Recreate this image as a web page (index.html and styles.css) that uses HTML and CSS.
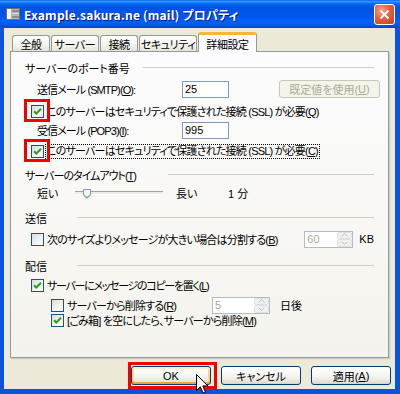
FILE: index.html
```html
<!DOCTYPE html>
<html>
<head>
    <meta charset="utf-8">
    <title>Example.sakura.ne (mail) プロパティ</title>
    <link rel="stylesheet" href="styles.css">
</head>
<body>
    <div class="window">
        <div class="title-bar">
            <svg class="title-icon" width="16" height="14" viewBox="0 0 16 14">
                <rect x="1.5" y="1.5" width="13" height="11" fill="#B9B9B4" stroke="#6E6E6A"/>
                <rect x="2" y="2" width="4" height="10" fill="#F4F4F0"/>
                <rect x="7" y="3" width="7" height="2" fill="#8C8C88"/>
                <rect x="7" y="6" width="7" height="1" fill="#DADAD5"/>
                <rect x="7" y="9" width="7" height="2" fill="#8C8C88"/>
            </svg>
            <span class="title-text">Example.sakura.ne (mail) プロパティ</span>
            <div class="close-btn">
                <svg width="11" height="11" viewBox="0 0 11 11">
                    <path d="M1.5 1.5 L9.5 9.5 M9.5 1.5 L1.5 9.5" stroke="#fff" stroke-width="2" fill="none"/>
                </svg>
            </div>
        </div>

        <div class="client">
            <div class="tabs">
                <div class="tab w-general">全般</div>
                <div class="tab w-server">サーバー</div>
                <div class="tab w-conn">接続</div>
                <div class="tab w-security">セキュリティ</div>
                <div class="tab active">詳細設定</div>
            </div>

            <div class="sheet">
                <!-- port numbers -->
                <div class="group">
                    <div class="group-head">
                        <span class="group-label w-port">サーバーのポート番号</span>
                        <span class="group-line"></span>
                    </div>
                    <div class="row field mt7">
                        <span class="field-label">送信メール (SMTP)(<u>O</u>):</span>
                        <span class="textbox">25</span>
                        <span class="btn disabled default-btn">既定値を使用(<u>U</u>)</span>
                    </div>
                    <div class="row cb mt8">
                        <span class="check on"><svg width="11" height="11" viewBox="0 0 11 11"><path d="M2 5.2 L4.3 7.5 L9 2.8" stroke="#21A121" stroke-width="2" fill="none"/></svg></span>
                        <span class="cb-text">このサーバーはセキュリティで保護された接続 (SSL) が必要(<u>Q</u>)</span>
                    </div>
                    <div class="row field mt5">
                        <span class="field-label">受信メール (POP3)(<u>I</u>):</span>
                        <span class="textbox">995</span>
                    </div>
                    <div class="row cb mt7">
                        <span class="check on"><svg width="11" height="11" viewBox="0 0 11 11"><path d="M2 5.2 L4.3 7.5 L9 2.8" stroke="#21A121" stroke-width="2" fill="none"/></svg></span>
                        <span class="cb-text focus">このサーバーはセキュリティで保護された接続 (SSL) が必要(<u>C</u>)</span>
                    </div>
                </div>

                <!-- timeout -->
                <div class="group mt10">
                    <div class="group-head">
                        <span class="group-label w-timeout">サーバーのタイムアウト(<u>T</u>)</span>
                        <span class="group-line"></span>
                    </div>
                    <div class="row field mt4">
                        <span class="slider-label">短い</span>
                        <span class="slider">
                            <span class="track"></span>
                            <svg class="thumb" width="8" height="10" viewBox="0 0 8 10">
                                <path d="M0.5 0.5 H7.5 V6 L4 9.5 L0.5 6 Z" fill="#F6F6F2" stroke="#8597A8"/>
                                <path d="M1.5 6.3 L4 8.6 L6.5 6.3" stroke="#3DB53D" fill="none"/>
                            </svg>
                        </span>
                        <span class="slider-label long">長い</span>
                        <span>1 分</span>
                    </div>
                </div>

                <!-- send -->
                <div class="group mt11">
                    <div class="group-head">
                        <span class="group-label w-short">送信</span>
                        <span class="group-line"></span>
                    </div>
                    <div class="row cb mt7">
                        <span class="check"></span>
                        <span class="cb-text">次のサイズよりメッセージが大きい場合は分割する(<u>B</u>)</span>
                        <span class="spin w-kb">
                            <span class="spin-val">60</span>
                            <span class="spin-btns">
                                <span class="spin-btn"><svg width="7" height="4" viewBox="0 0 7 4"><path d="M0.5 3.5 L3.5 0.5 L6.5 3.5" stroke="#C3C2BA" fill="none"/></svg></span>
                                <span class="spin-btn"><svg width="7" height="4" viewBox="0 0 7 4"><path d="M0.5 0.5 L3.5 3.5 L6.5 0.5" stroke="#C3C2BA" fill="none"/></svg></span>
                            </span>
                        </span>
                        <span class="unit">KB</span>
                    </div>
                </div>

                <!-- delivery -->
                <div class="group mt13">
                    <div class="group-head">
                        <span class="group-label w-short">配信</span>
                        <span class="group-line"></span>
                    </div>
                    <div class="row cb mt5">
                        <span class="check on"><svg width="11" height="11" viewBox="0 0 11 11"><path d="M2 5.2 L4.3 7.5 L9 2.8" stroke="#21A121" stroke-width="2" fill="none"/></svg></span>
                        <span class="cb-text tight">サーバーにメッセージのコピーを置く(<u>L</u>)</span>
                    </div>
                    <div class="row cb sub mt6">
                        <span class="check"></span>
                        <span class="cb-text w-delete">サーバーから削除する(<u>R</u>)</span>
                        <span class="spin w-days">
                            <span class="spin-val">5</span>
                            <span class="spin-btns">
                                <span class="spin-btn"><svg width="7" height="4" viewBox="0 0 7 4"><path d="M0.5 3.5 L3.5 0.5 L6.5 3.5" stroke="#C3C2BA" fill="none"/></svg></span>
                                <span class="spin-btn"><svg width="7" height="4" viewBox="0 0 7 4"><path d="M0.5 0.5 L3.5 3.5 L6.5 0.5" stroke="#C3C2BA" fill="none"/></svg></span>
                            </span>
                        </span>
                        <span class="days">日後</span>
                    </div>
                    <div class="row cb sub mt1">
                        <span class="check on"><svg width="11" height="11" viewBox="0 0 11 11"><path d="M2 5.2 L4.3 7.5 L9 2.8" stroke="#21A121" stroke-width="2" fill="none"/></svg></span>
                        <span class="cb-text">[ごみ箱] を空にしたら、サーバーから削除(<u>M</u>)</span>
                    </div>
                </div>
            </div>

            <div class="buttons">
                <div class="btn hot">OK</div>
                <div class="btn">キャンセル</div>
                <div class="btn">適用(<u>A</u>)</div>
            </div>
        </div>

        <!-- annotation boxes -->
        <div class="mark mark-ssl1"></div>
        <div class="mark mark-ssl2"></div>
        <div class="mark mark-ok"></div>

        <svg class="cursor" width="13" height="21" viewBox="0 0 13 21">
            <path d="M0.5 0.5 L0.5 16.5 L4.3 12.8 L7 19 L9.4 18 L6.8 11.9 L11.8 11.9 Z" fill="#fff" stroke="#000"/>
        </svg>
    </div>
</body>
</html>
```

FILE: styles.css
```css
body { margin: 0; font-family: "Liberation Sans", "Noto Sans CJK JP", sans-serif; font-size: 11px; color: #000; font-feature-settings: "palt"; overflow: hidden; }
u { text-decoration: underline; text-underline-offset: 1px; }

.window { width: 400px; height: 394px; display: flex; flex-direction: column; position: relative; overflow: hidden; }

/* title bar */
.title-bar {
    height: 28px;
    flex: none;
    display: flex;
    align-items: center;
    padding: 0 5px;
    background: linear-gradient(to bottom, #0058EE 0%, #3A93FF 4%, #288EFF 7%, #127DFF 10%, #036FFC 13%, #0262EE 17%, #0057E5 24%, #0054E3 30%, #0055EB 58%, #005BF5 68%, #0260F7 80%, #005AEE 88%, #0052D6 93%, #0047C2 100%);
}
.title-icon { margin-right: 3px; flex: none; }
.title-text { font-family: "Noto Sans CJK JP", sans-serif; color: #fff; font-weight: bold; font-size: 12px; text-shadow: 1px 1px #0A1883; letter-spacing: 0.2px; }
.close-btn {
    margin-left: auto;
    width: 21px;
    height: 21px;
    box-sizing: border-box;
    border: 1px solid #fff;
    border-radius: 3px;
    background: radial-gradient(circle at 35% 30%, #F3A58A 0%, #E5603C 45%, #C8401F 100%);
    display: flex;
    align-items: center;
    justify-content: center;
}

/* client area */
.client {
    flex: 1;
    background: #ECE9D8;
    border: solid #0855DD;
    border-width: 0 5px 5px 4px;
    padding-top: 4px;
    display: flex;
    flex-direction: column;
}

.tabs { height: 19px; display: flex; align-items: flex-end; gap: 1px; margin-left: 8px; position: relative; z-index: 1; }
.tab {
    height: 16px;
    box-sizing: border-box;
    border: 1px solid #919B9C;
    border-bottom: none;
    border-radius: 3px 3px 0 0;
    background: linear-gradient(#FFFFFF, #F3F2EC 60%, #E6E4DA);
    display: flex;
    align-items: center;
    justify-content: center;
    white-space: nowrap;
    letter-spacing: -0.4px;
}
.tab.w-general { width: 38px; }
.tab.w-server { width: 48px; }
.tab.w-conn { width: 38px; }
.tab.w-security { width: 58px; }
.tab.active {
    width: 59px;
    height: 20px;
    margin-bottom: -1px;
    border-top: 3px solid #F7B53A;
    background: #FCFCFE;
}

.sheet {
    margin-left: 6px;
    width: 379px;
    height: 307px;
    box-sizing: border-box;
    border: 1px solid #919B9C;
    background: linear-gradient(#FCFCFE, #F7F6F1 70%, #F3F2EC);
    box-shadow: 1px 1px 0 #D0CEBF, 2px 2px 0 #E3E0D0;
    padding: 9px 14px 0 14px;
}

.group-head { height: 14px; display: flex; align-items: center; white-space: nowrap; }
.group-label { flex: none; }
.group-label.w-port { width: 118px; }
.group-label.w-timeout { width: 143px; letter-spacing: -1px; }
.group-label.w-short { width: 52px; }
.group-line { flex: 1; border-top: 1px solid #D0D0BF; margin-top: -1px; }

.row { height: 14px; display: flex; align-items: center; white-space: nowrap; }
.row.field { padding-left: 12px; }
.row.cb { padding-left: 6px; }
.row.cb.sub { padding-left: 26px; }

.mt1 { margin-top: 1px; }
.mt4 { margin-top: 4px; }
.mt5 { margin-top: 5px; }
.mt6 { margin-top: 6px; }
.mt7 { margin-top: 7px; }
.mt8 { margin-top: 8px; }
.mt10 { margin-top: 10px; }
.mt11 { margin-top: 11px; }
.mt13 { margin-top: 13px; }

.field-label { width: 145px; flex: none; letter-spacing: -0.9px; }
.textbox {
    width: 47px;
    height: 17px;
    box-sizing: border-box;
    border: 1px solid #7F9DB9;
    background: #fff;
    padding-left: 2px;
    display: flex;
    align-items: center;
    flex: none;
}

.check {
    width: 13px;
    height: 13px;
    box-sizing: border-box;
    border: 1px solid #1C5180;
    background: linear-gradient(135deg, #DCDCD7 0%, #F4F4F0 60%, #FFFFFF 100%);
    display: flex;
    flex: none;
}
.cb-text { margin-left: 3px; letter-spacing: -0.8px; }
.cb-text.tight { letter-spacing: -1.3px; }
.cb-text.focus { outline: 1px dotted #000; outline-offset: 0; padding: 0 1px; margin-left: 2px; line-height: 13px; }
.cb-text.w-delete { width: 145px; flex: none; }

.slider-label { width: 38px; flex: none; }
.slider-label.long { width: 52px; margin-left: 13px; }
.slider { width: 88px; height: 14px; position: relative; flex: none; display: flex; align-items: center; }
.track { width: 100%; height: 2px; background: #ECEBE4; border-top: 1px solid #A4A39C; border-bottom: 1px solid #fff; }
.thumb { position: absolute; left: 8px; top: 3px; }

.spin {
    height: 17px;
    box-sizing: border-box;
    border: 1px solid #AFBCCB;
    background: #fff;
    display: flex;
    flex: none;
}
.spin.w-kb { width: 49px; margin-left: auto; }
.spin.w-days { width: 58px; }
.spin-val { flex: 1; color: #ACA899; padding-left: 2px; display: flex; align-items: center; }
.spin-btns { width: 15px; display: flex; flex-direction: column; }
.spin-btn { flex: 1; background: #F1F1EC; border: 1px solid #DCE1E8; border-radius: 2px; display: flex; align-items: center; justify-content: center; }
.unit { margin-left: 6px; }
.days { margin-left: 10px; }

/* buttons */
.btn {
    height: 19px;
    box-sizing: border-box;
    border: 1px solid #003C74;
    border-radius: 3px;
    background: linear-gradient(#FFFFFF, #F4F4F0 55%, #E4E1D6 90%, #D6D0C5);
    display: flex;
    align-items: center;
    justify-content: center;
    flex: none;
    white-space: nowrap;
}
.buttons { display: flex; gap: 10px; justify-content: flex-end; margin: 8px 4px 0 0; }
.buttons .btn { width: 80px; }
.btn.hot { box-shadow: inset 0 2px 0 #FFEFC8, inset 0 -2px 0 #EFA23A, inset 2px 0 0 #FBD58A, inset -2px 0 0 #FBD58A; }
.btn.disabled { border-color: #C9C7BA; color: #ACA899; background: #F5F4EA; }
.btn.default-btn { width: 101px; height: 18px; margin-left: 50px; }

/* overlays */
.mark { position: absolute; border: 3px solid #F20000; box-sizing: border-box; }
.mark-ssl1 { left: 24px; top: 99px; width: 26px; height: 23px; }
.mark-ssl2 { left: 24px; top: 139px; width: 26px; height: 23px; }
.mark-ok { left: 128px; top: 362px; width: 89px; height: 27px; }
.cursor { position: absolute; left: 196px; top: 374px; }
```
